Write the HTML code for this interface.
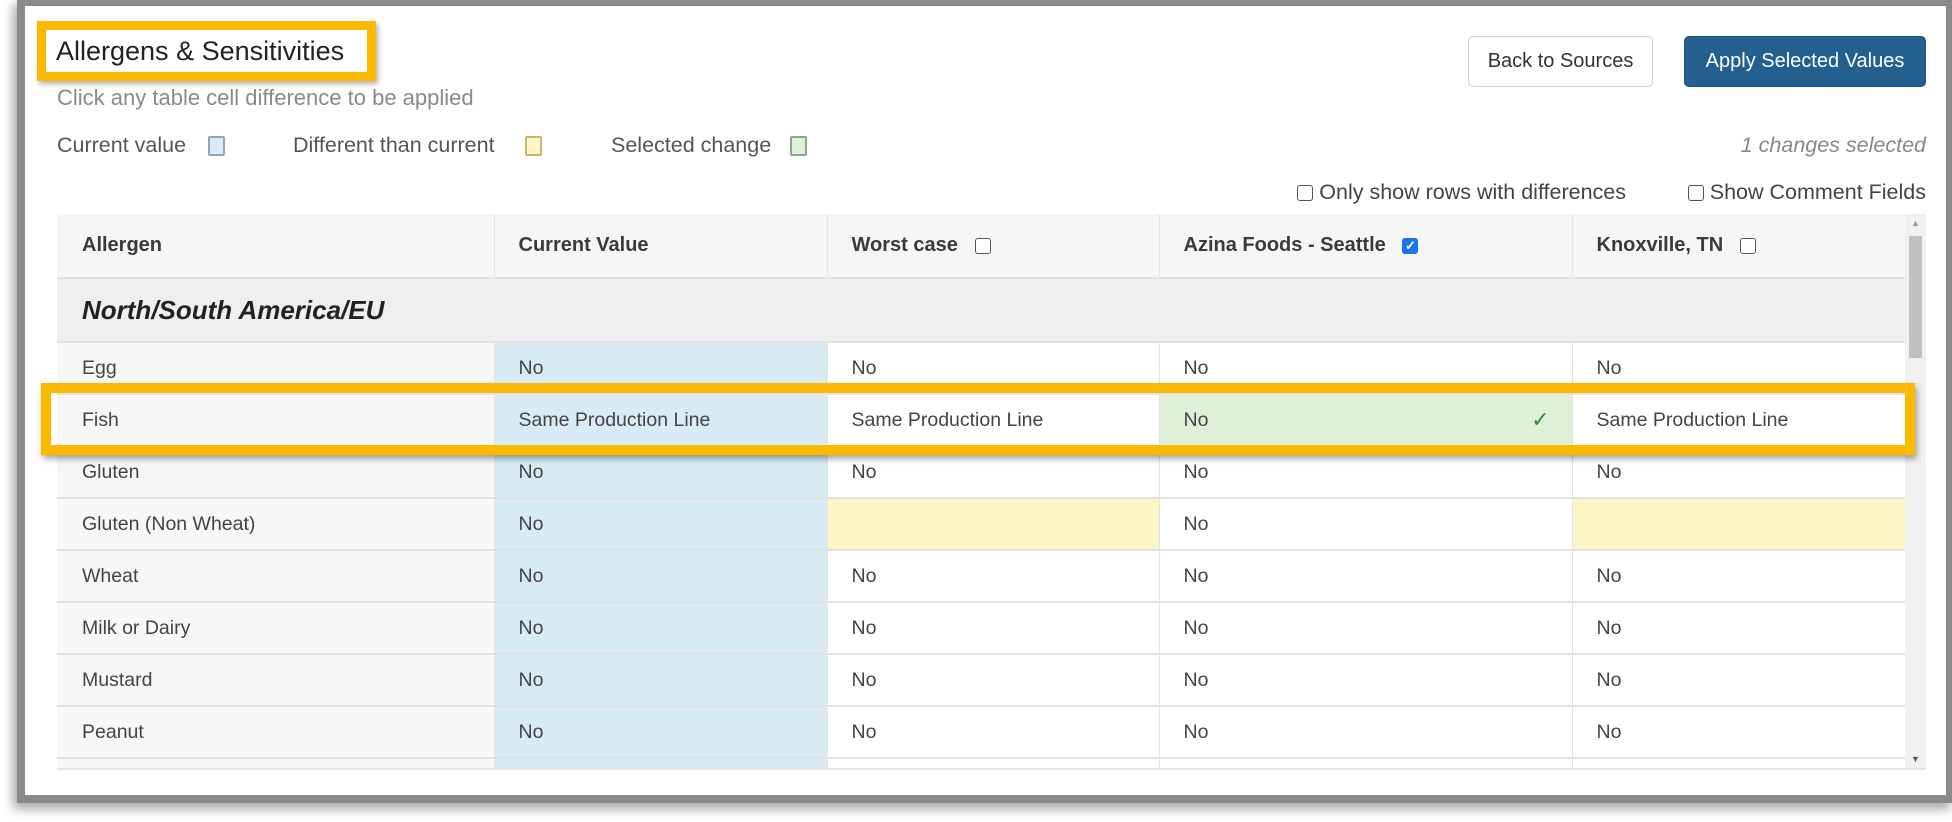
<!DOCTYPE html>
<html><head><meta charset="utf-8"><style>
*{box-sizing:border-box;margin:0;padding:0}
body{width:1952px;height:822px;background:#fff;position:relative;overflow:hidden;font-family:"Liberation Sans",sans-serif;color:#444}
.frame{position:absolute;left:17px;top:-2px;width:1937px;height:805px;border:8px solid #8a8a8a;background:#fff;box-shadow:-4px 6px 10px rgba(0,0,0,.35)}
.abs{position:absolute;white-space:nowrap}
.title{left:37px;top:21px;width:339px;height:60px;border:9px solid #fbb900;box-shadow:2px 3px 5px rgba(0,0,0,.3);}
.title span{position:absolute;left:10px;top:6px;font-size:27px;color:#222}
.lg{font-size:21.5px;color:#555;top:133px}
.sw{width:17px;height:20px;top:136px;border:2px solid #aac;border-radius:2px}
.btn{top:36px;height:51px;border-radius:5px;font-size:20px;line-height:49px;text-align:center}
.cb{width:16px;height:16px;border:1.5px solid #555;border-radius:3px;display:inline-block;vertical-align:middle;background:#fff}
table{position:absolute;left:57px;top:214px;width:1848px;border-collapse:collapse;table-layout:fixed;font-size:19.5px}
td,th{border-bottom:2px solid #e2e2e2;border-right:1px solid #e4e4e4;padding:0 0 0 24px;text-align:left;white-space:nowrap;overflow:hidden}
th{height:64px;background:#f6f6f6;font-size:20px;font-weight:bold;color:#3a3a3a}
td{height:52px;background:#fff}
td:first-child{background:#f7f7f7;padding-left:25px}
td.c{background:#d9ecf6}
td.y{background:#fdf5c6}
td.g{background:#dff0d8;position:relative}
tr.sec td{background:#efefef;height:64px;font-size:26px;font-weight:bold;font-style:italic;color:#222}
</style></head><body>
<div class="frame"></div>
<div class="abs title"><span>Allergens &amp; Sensitivities</span></div>
<div class="abs" style="left:57px;top:85px;font-size:22px;color:#8a8a8a">Click any table cell difference to be applied</div>
<div class="abs lg" style="left:57px">Current value</div>
<div class="abs sw" style="left:208px;background:#d9ecf6;border-color:#8fa7b8"></div>
<div class="abs lg" style="left:293px">Different than current</div>
<div class="abs sw" style="left:525px;background:#fdf5c6;border-color:#c8b66a"></div>
<div class="abs lg" style="left:611px">Selected change</div>
<div class="abs sw" style="left:790px;background:#dff0d8;border-color:#8aa882"></div>
<div class="abs lg" style="right:26px;font-style:italic;color:#888">1 changes selected</div>
<div class="abs btn" style="left:1468px;width:185px;border:1.5px solid #ccc;color:#333;background:#fff">Back to Sources</div>
<div class="abs btn" style="left:1684px;width:242px;background:#23608f;color:#fff;border:1px solid #1d527b">Apply Selected Values</div>
<div class="abs" style="right:326px;top:180px;font-size:21.5px;color:#444"><span class="cb"></span> Only show rows with differences</div>
<div class="abs" style="right:26px;top:180px;font-size:21.5px;color:#444"><span class="cb"></span> Show Comment Fields</div>
<div style="position:absolute;left:57px;top:214px;width:1869px;height:556px;overflow:hidden;border-bottom:2px solid #e2e2e2">
<table style="left:0;top:0">
<colgroup><col style="width:437px"><col style="width:333px"><col style="width:332px"><col style="width:413px"><col style="width:333px"></colgroup>
<tr><th style="padding-left:25px">Allergen</th><th>Current Value</th><th>Worst case &nbsp;&nbsp;<span class="cb"></span></th><th>Azina Foods - Seattle &nbsp;&nbsp;<span class="cb" style="background:#1a73e8;border-color:#1a73e8;color:#fff;font-size:13px;line-height:13px;text-align:center">✓</span></th><th>Knoxville, TN &nbsp;&nbsp;<span class="cb"></span></th></tr>
<tr class="sec"><td colspan="5">North/South America/EU</td></tr>
<tr><td>Egg</td><td class="c">No</td><td>No</td><td>No</td><td>No</td></tr>
<tr><td>Fish</td><td class="c">Same Production Line</td><td>Same Production Line</td><td class="g">No<span style="position:absolute;right:22px;top:12px;color:#3c8a3c;font-size:22px">✓</span></td><td>Same Production Line</td></tr>
<tr><td>Gluten</td><td class="c">No</td><td>No</td><td>No</td><td>No</td></tr>
<tr><td>Gluten (Non Wheat)</td><td class="c">No</td><td class="y"></td><td>No</td><td class="y"></td></tr>
<tr><td>Wheat</td><td class="c">No</td><td>No</td><td>No</td><td>No</td></tr>
<tr><td>Milk or Dairy</td><td class="c">No</td><td>No</td><td>No</td><td>No</td></tr>
<tr><td>Mustard</td><td class="c">No</td><td>No</td><td>No</td><td>No</td></tr>
<tr><td>Peanut</td><td class="c">No</td><td>No</td><td>No</td><td>No</td></tr>
<tr><td></td><td class="c"></td><td></td><td></td><td></td></tr>
</table>
<div style="position:absolute;left:1848px;top:0;width:21px;height:556px;background:#f1f1f1"></div>
<div style="position:absolute;left:1852px;top:22px;width:13px;height:122px;background:#c1c1c1"></div>
<div style="position:absolute;left:1854px;top:4px;font-size:9px;color:#999">▲</div>
<div style="position:absolute;left:1854px;top:540px;font-size:9px;color:#555">▼</div>
</div>
<div class="abs" style="left:41px;top:383px;width:1874px;height:72px;border:10px solid #fbb900;box-shadow:2px 4px 6px rgba(0,0,0,.35)"></div>
</body></html>
